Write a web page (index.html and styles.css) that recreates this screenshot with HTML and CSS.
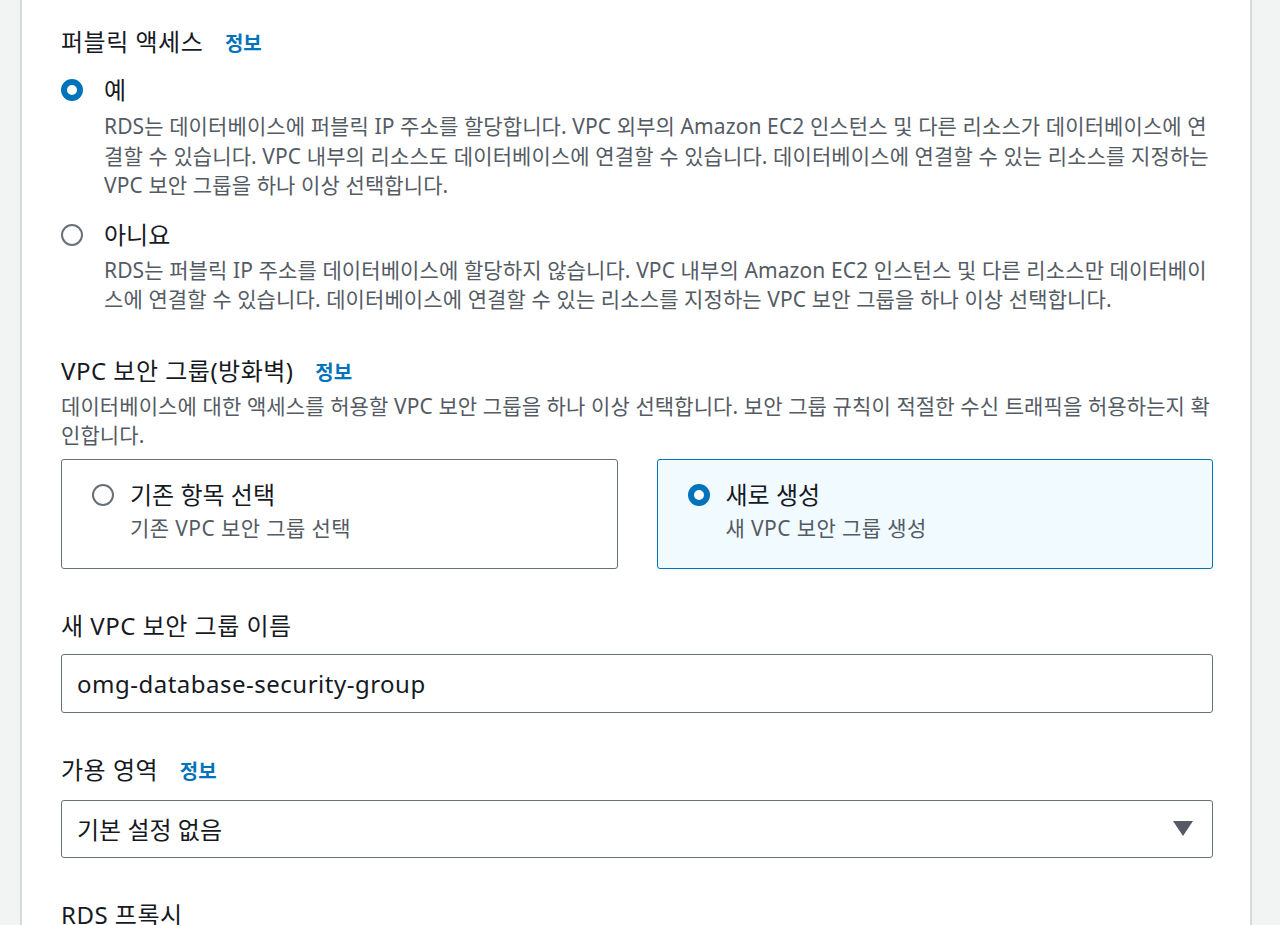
FILE: index.html
```html
<!DOCTYPE html>
<html lang="ko">
<head>
<meta charset="utf-8">
<link rel="stylesheet" href="styles.css">
</head>
<body>
<div class="page">
  <div class="gutter"></div>
  <main class="panel">
    <section class="field first">
      <div class="field-title">퍼블릭 액세스 <a class="info">정보</a></div>
      <div class="radio-option">
        <div class="radio-row"><span class="radio checked"></span><span class="radio-label">예</span></div>
        <p class="radio-desc">RDS는 데이터베이스에 퍼블릭 IP 주소를 할당합니다. VPC 외부의 Amazon EC2 인스턴스 및 다른 리소스가 데이터베이스에 연결할 수 있습니다. VPC 내부의 리소스도 데이터베이스에 연결할 수 있습니다. 데이터베이스에 연결할 수 있는 리소스를 지정하는 VPC 보안 그룹을 하나 이상 선택합니다.</p>
      </div>
      <div class="radio-option second">
        <div class="radio-row"><span class="radio"></span><span class="radio-label">아니요</span></div>
        <p class="radio-desc">RDS는 퍼블릭 IP 주소를 데이터베이스에 할당하지 않습니다. VPC 내부의 Amazon EC2 인스턴스 및 다른 리소스만 데이터베이스에 연결할 수 있습니다. 데이터베이스에 연결할 수 있는 리소스를 지정하는 VPC 보안 그룹을 하나 이상 선택합니다.</p>
      </div>
    </section>

    <section class="field tight">
      <div class="field-title">VPC 보안 그룹(방화벽) <a class="info">정보</a></div>
      <p class="field-desc">데이터베이스에 대한 액세스를 허용할 VPC 보안 그룹을 하나 이상 선택합니다. 보안 그룹 규칙이 적절한 수신 트래픽을 허용하는지 확인합니다.</p>
      <div class="tiles">
        <div class="tile">
          <div class="tile-row"><span class="radio"></span><span class="radio-label">기존 항목 선택</span></div>
          <div class="tile-desc">기존 VPC 보안 그룹 선택</div>
        </div>
        <div class="tile selected">
          <div class="tile-row"><span class="radio checked"></span><span class="radio-label">새로 생성</span></div>
          <div class="tile-desc">새 VPC 보안 그룹 생성</div>
        </div>
      </div>
    </section>

    <section class="field">
      <div class="field-title">새 VPC 보안 그룹 이름</div>
      <div class="input">omg-database-security-group</div>
    </section>

    <section class="field">
      <div class="field-title">가용 영역 <a class="info">정보</a></div>
      <div class="input select">
        <span>기본 설정 없음</span>
        <svg class="caret" width="20" height="15" viewBox="0 0 20 15"><path d="M0 0 H20 L10 15 Z" fill="#545b64"/></svg>
      </div>
    </section>

    <section class="field">
      <div class="field-title">RDS 프록시</div>
    </section>
  </main>
  <div class="gutter-right"></div>
</div>
</body>
</html>
```

FILE: styles.css
```css
html, body {
  margin: 0;
  padding: 0;
  background: #f2f3f3;
  font-family: "Noto Sans", "Noto Sans CJK KR", sans-serif;
  color: #16191f;
}

.page {
  display: flex;
  height: 925px;
  overflow: hidden;
}

.gutter {
  width: 20px;
  flex: none;
}

.gutter-right {
  flex: 1;
}

.panel {
  width: 1232px;
  flex: none;
  background: #fff;
  border-left: 2px solid #d5dbdb;
  border-right: 2px solid #d5dbdb;
  padding: 28px 37px 0 39px;
  box-sizing: border-box;
}

.field {
  margin-top: 43px;
}

.field.first {
  margin-top: 0;
}

.field.tight {
  margin-top: 42px;
}

.field-title {
  font-size: 24px;
  line-height: 28px;
  letter-spacing: 0.5px;
  color: #16191f;
  white-space: nowrap;
}

.info {
  color: #0073bb;
  font-weight: 700;
  font-size: 20px;
  letter-spacing: 0;
  margin-left: 15px;
}

.radio-option {
  margin-top: 18px;
}

.radio-option.second {
  margin-top: 20px;
}

.radio-row, .tile-row {
  display: flex;
  align-items: center;
  height: 28px;
}

.radio {
  width: 22px;
  height: 22px;
  box-sizing: border-box;
  border-radius: 50%;
  border: 2px solid #687078;
  background: #fff;
  flex: none;
}

.radio.checked {
  border: 6.5px solid #0073bb;
}

.radio-label {
  font-size: 24px;
  line-height: 28px;
  margin-left: 21px;
}

.radio-desc, .field-desc, .tile-desc {
  font-size: 21px;
  line-height: 29.5px;
  letter-spacing: 0.1px;
  color: #545b64;
}

.radio-desc {
  margin: 8px 0 0 43px;
}

.radio-option.second .radio-desc {
  margin-top: 7px;
}

.field-desc {
  margin: 5px 0 0 0;
}

.tiles {
  display: grid;
  grid-template-columns: 1fr 1fr;
  gap: 39px;
  margin-top: 8px;
}

.tile {
  height: 110px;
  box-sizing: border-box;
  border: 1.5px solid #687078;
  border-radius: 3px;
  padding: 21.5px 30px 0;
}

.tile.selected {
  border-color: #0073bb;
  background: #f1faff;
}

.tile .radio-label {
  margin-left: 16px;
}

.tile-desc {
  margin: 5px 0 0 38px;
  letter-spacing: 0.4px;
}

.input {
  margin-top: 14px;
  height: 59px;
  box-sizing: border-box;
  border: 1.5px solid #687078;
  border-radius: 3px;
  padding: 0 15px;
  display: flex;
  align-items: center;
  font-size: 24px;
  letter-spacing: 0.5px;
  color: #16191f;
}

.select {
  height: 58px;
  justify-content: space-between;
  letter-spacing: 0;
}

.caret {
  margin-right: 4px;
}
```
